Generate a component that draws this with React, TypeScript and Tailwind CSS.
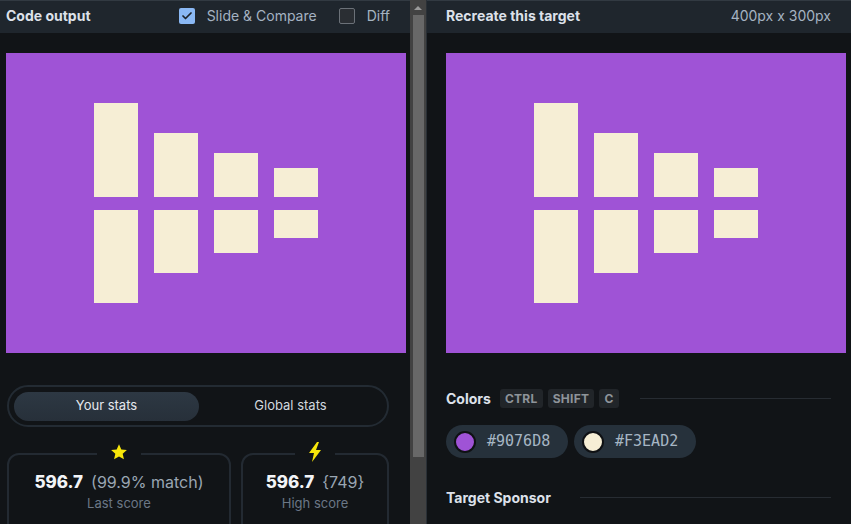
import { Check } from "lucide-react";

// target shape: columns of paired bars, top half grows upward, bottom half downward
const bars = [
  { top: 94, bottom: 93 },
  { top: 64, bottom: 63 },
  { top: 44, bottom: 43 },
  { top: 29, bottom: 28 },
];

function Target() {
  return (
    <div className="w-[400px] h-[300px] bg-[#9f53d6] flex items-center pl-[88px] gap-[16px]">
      {bars.map((b, i) => (
        <div key={i} className="flex flex-col gap-[13px] w-[44px]">
          <div className="flex flex-col justify-end h-[94px]">
            <div className="bg-[#f6eed5] w-[44px]" style={{ height: b.top }} />
          </div>
          <div className="flex flex-col justify-start h-[93px]">
            <div className="bg-[#f6eed5] w-[44px]" style={{ height: b.bottom }} />
          </div>
        </div>
      ))}
    </div>
  );
}

function Star() {
  return (
    <svg width="18" height="18" viewBox="0 0 24 24">
      <path d="M12 1.8l3.1 6.9 7.4.7-5.6 5 1.7 7.4L12 18l-6.6 3.8 1.7-7.4-5.6-5 7.4-.7z" fill="#f7e60a" />
    </svg>
  );
}

function Bolt() {
  return (
    <svg width="14" height="20" viewBox="0 0 14 20">
      <path d="M9 0L1 11h5l-2 9 9-12H8l3-8z" fill="#f7e60a" />
    </svg>
  );
}

function Key({ label }: { label: string }) {
  return (
    <span className="px-[5px] h-[19px] flex items-center rounded-[3px] bg-[#212529] text-[#8e949a] text-[12px] font-bold tracking-wide">
      {label}
    </span>
  );
}

function Chip({ color, hex }: { color: string; hex: string }) {
  return (
    <div className="flex items-center h-[33px] w-[122px] rounded-full bg-[#26313b] pl-[8px] gap-[11px]">
      <span className="w-[22px] h-[22px] rounded-full border-2 border-[#0f1114]" style={{ background: color }} />
      <span className="text-[15px] text-[#a6b6c4]" style={{ fontFamily: '"DejaVu Sans Mono", monospace' }}>
        {hex}
      </span>
    </div>
  );
}

export default function App() {
  return (
    <div
      className="flex w-[851px] h-[524px] overflow-hidden bg-[#111417] text-[#dfe3ea]"
      style={{ fontFamily: 'Inter, "Noto Sans", sans-serif' }}
    >
      {/* left: code output */}
      <div className="w-[410px] shrink-0 flex flex-col">
        <div className="h-[33px] shrink-0 bg-[#1f262d] border-t border-[#323a42] flex items-center pl-[6px] pr-[20px] pb-[3px]">
          <span className="font-bold text-[14px] text-[#dde1ea]">Code output</span>
          <div className="ml-auto flex items-center gap-[12px]">
            <span className="w-[16px] h-[16px] rounded-[2px] bg-[#8ab8f4] flex items-center justify-center">
              <Check className="w-[12px] h-[12px] text-[#1d232a]" strokeWidth={3.5} />
            </span>
            <span className="text-[14px] text-[#a5b3c2]">Slide &amp; Compare</span>
            <span className="ml-[10px] w-[16px] h-[16px] rounded-[2px] border border-[#6b7178] bg-[#2a2e33]" />
            <span className="text-[14px] text-[#a5b3c2]">Diff</span>
          </div>
        </div>
        <div className="mt-[20px] ml-[6px]">
          <Target />
        </div>

        <div className="mt-[32px] ml-[7px] w-[382px] h-[42px] rounded-full border-2 border-[#232b33] flex items-center p-[5px]">
          <div className="w-[185px] h-[29px] rounded-full bg-gradient-to-b from-[#2d3843] to-[#27303a] flex items-center justify-center text-[13px] text-[#e4e8ee]">
            Your stats
          </div>
          <div className="flex-1 text-center text-[13px] text-[#d2d8df]">Global stats</div>
        </div>

        <div className="mt-[26px] ml-[7px] flex gap-[10px]">
          <div className="relative w-[224px] h-[90px] rounded-[12px] border-2 border-[#232a32] flex flex-col items-center pt-[16px]">
            <div className="absolute -top-[12px] left-1/2 -translate-x-1/2 bg-[#111417] px-[13px]">
              <Star />
            </div>
            <div className="flex items-baseline gap-[8px] leading-[22px]">
              <span className="font-extrabold text-[17px] text-[#f2f4f7]">596.7</span>
              <span className="text-[16px] text-[#9aa6b3]">(99.9% match)</span>
            </div>
            <span className="mt-[1px] text-[13px] leading-[18px] text-[#6b7786]">Last score</span>
          </div>
          <div className="relative w-[148px] h-[90px] rounded-[12px] border-2 border-[#232a32] flex flex-col items-center pt-[16px]">
            <div className="absolute -top-[13px] left-1/2 -translate-x-1/2 bg-[#111417] px-[13px]">
              <Bolt />
            </div>
            <div className="flex items-baseline gap-[8px] leading-[22px]">
              <span className="font-extrabold text-[17px] text-[#f2f4f7]">596.7</span>
              <span className="text-[16px] text-[#9aa6b3]">{"{749}"}</span>
            </div>
            <span className="mt-[1px] text-[13px] leading-[18px] text-[#6b7786]">High score</span>
          </div>
        </div>
      </div>

      {/* scrollbar */}
      <div className="w-[16px] shrink-0 bg-[#424242] flex flex-col items-center">
        <div className="h-[15px] flex items-center justify-center">
          <span className="w-0 h-0 border-l-[4px] border-r-[4px] border-b-[4px] border-l-transparent border-r-transparent border-b-[#9a9a9a]" />
        </div>
        <div className="w-[11px] h-[442px] bg-[#686868]" />
      </div>

      {/* right: target */}
      <div className="flex-1 flex flex-col border-l border-[#2a3036]">
        <div className="h-[33px] shrink-0 bg-[#1f262d] border-t border-[#323a42] flex items-center pl-[19px] pr-[20px] pb-[3px]">
          <span className="font-bold text-[14px] text-[#dde1ea]">Recreate this target</span>
          <span className="ml-auto text-[14px] text-[#a5b3c2]">400px x 300px</span>
        </div>
        <div className="mt-[20px] ml-[19px]">
          <Target />
        </div>

        <div className="mt-[35px] ml-[19px] mr-[20px] flex items-center gap-[5px]">
          <span className="font-bold text-[14px] text-[#dde1ea] mr-[4px]">Colors</span>
          <Key label="CTRL" />
          <Key label="SHIFT" />
          <Key label="C" />
          <div className="flex-1 ml-[16px] h-px bg-[#272c32]" />
        </div>

        <div className="mt-[16px] ml-[19px] flex gap-[6px]">
          <Chip color="#9f53d6" hex="#9076D8" />
          <Chip color="#f6eed5" hex="#F3EAD2" />
        </div>

        <div className="mt-[29px] ml-[19px] mr-[20px] flex items-center">
          <span className="font-bold text-[14px] text-[#dde1ea]">Target Sponsor</span>
          <div className="flex-1 ml-[29px] h-px bg-[#272c32]" />
        </div>
      </div>
    </div>
  );
}
